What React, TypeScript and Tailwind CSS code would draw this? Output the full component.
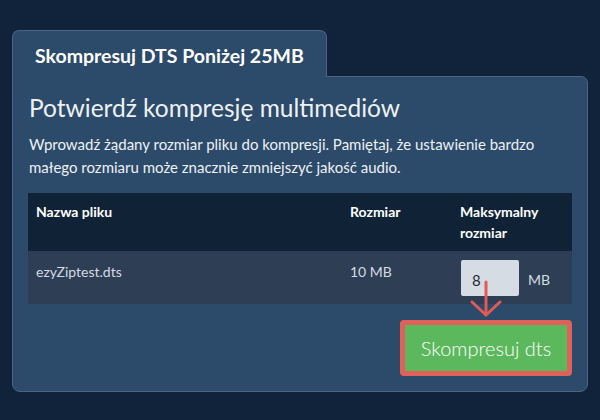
export default function App() {
  return (
    <div className="w-[600px] h-[420px] bg-[#10233a] pt-[30px] pl-[12px] font-['Lato',sans-serif]">
      <div className="relative z-10 -mb-px w-[315px] h-[47px] rounded-t-[7px] border border-b-0 border-[#4b6584] bg-[#2c4a6a] pl-[22px] pt-[13px]">
        <h2 className="text-[19.5px] font-bold leading-[24px] text-white">Skompresuj DTS Poniżej 25MB</h2>
      </div>
      <div className="w-[576px] h-[316px] rounded-tr-[7px] rounded-b-[8px] border border-[#4b6584] bg-[#2c4a6a] px-[15px] pt-[16px]">
        <h1 className="pl-[1px] text-[24.5px] leading-[30px] text-[#eef1f4]">Potwierdź kompresję multimediów</h1>
        <p className="mt-[10px] pl-[1px] text-[15px] leading-[23px] text-[#eef1f4]">
          Wprowadź żądany rozmiar pliku do kompresji. Pamiętaj, że ustawienie bardzo małego rozmiaru może znacznie zmniejszyć jakość audio.
        </p>
        <table className="mt-[14px] w-[544px] border-collapse text-left">
          <thead>
            <tr className="h-[58px] bg-[#0f2236] align-top text-[14px] font-bold leading-[21px] text-white">
              <th className="w-[314px] pl-[8px] pt-[8px]">Nazwa pliku</th>
              <th className="w-[110px] pl-[8px] pt-[8px]">Rozmiar</th>
              <th className="pl-[8px] pt-[8px] pr-[20px]">Maksymalny rozmiar</th>
            </tr>
          </thead>
          <tbody>
            <tr className="h-[53px] bg-[#2e3e54] align-top text-[14px] text-[#d5dbe2]">
              <td className="pl-[8px] pt-[10px]">ezyZiptest.dts</td>
              <td className="pl-[8px] pt-[10px]">10 MB</td>
              <td className="pl-[9px] pt-[9px]">
                <div className="flex items-center gap-[9px]">
                  <input
                    defaultValue="8"
                    className="h-[36px] w-[58px] rounded-[2px] bg-[#d6dce4] px-[11px] pt-[3px] text-[15px] text-[#1f2a38] outline-none"
                  />
                  <span className="pt-[2px] text-[14px] text-[#d5dbe2]">MB</span>
                </div>
              </td>
            </tr>
          </tbody>
        </table>
        <div className="relative flex justify-end pt-[16px]">
          <svg
            className="absolute left-[437px] top-[-24px]"
            width="44"
            height="38"
            viewBox="0 0 44 38"
            fill="none"
            stroke="#e05b56"
            strokeWidth="3"
            strokeLinecap="round"
          >
            <path d="M21 2 V34" />
            <path d="M7 22 L21 35 L35 22" />
          </svg>
          <button className="h-[56px] w-[172px] rounded-[4px] border-[5px] border-[#e0605a] bg-[#5cb85c] text-[20px] font-light text-white">
            Skompresuj dts
          </button>
        </div>
      </div>
    </div>
  );
}
